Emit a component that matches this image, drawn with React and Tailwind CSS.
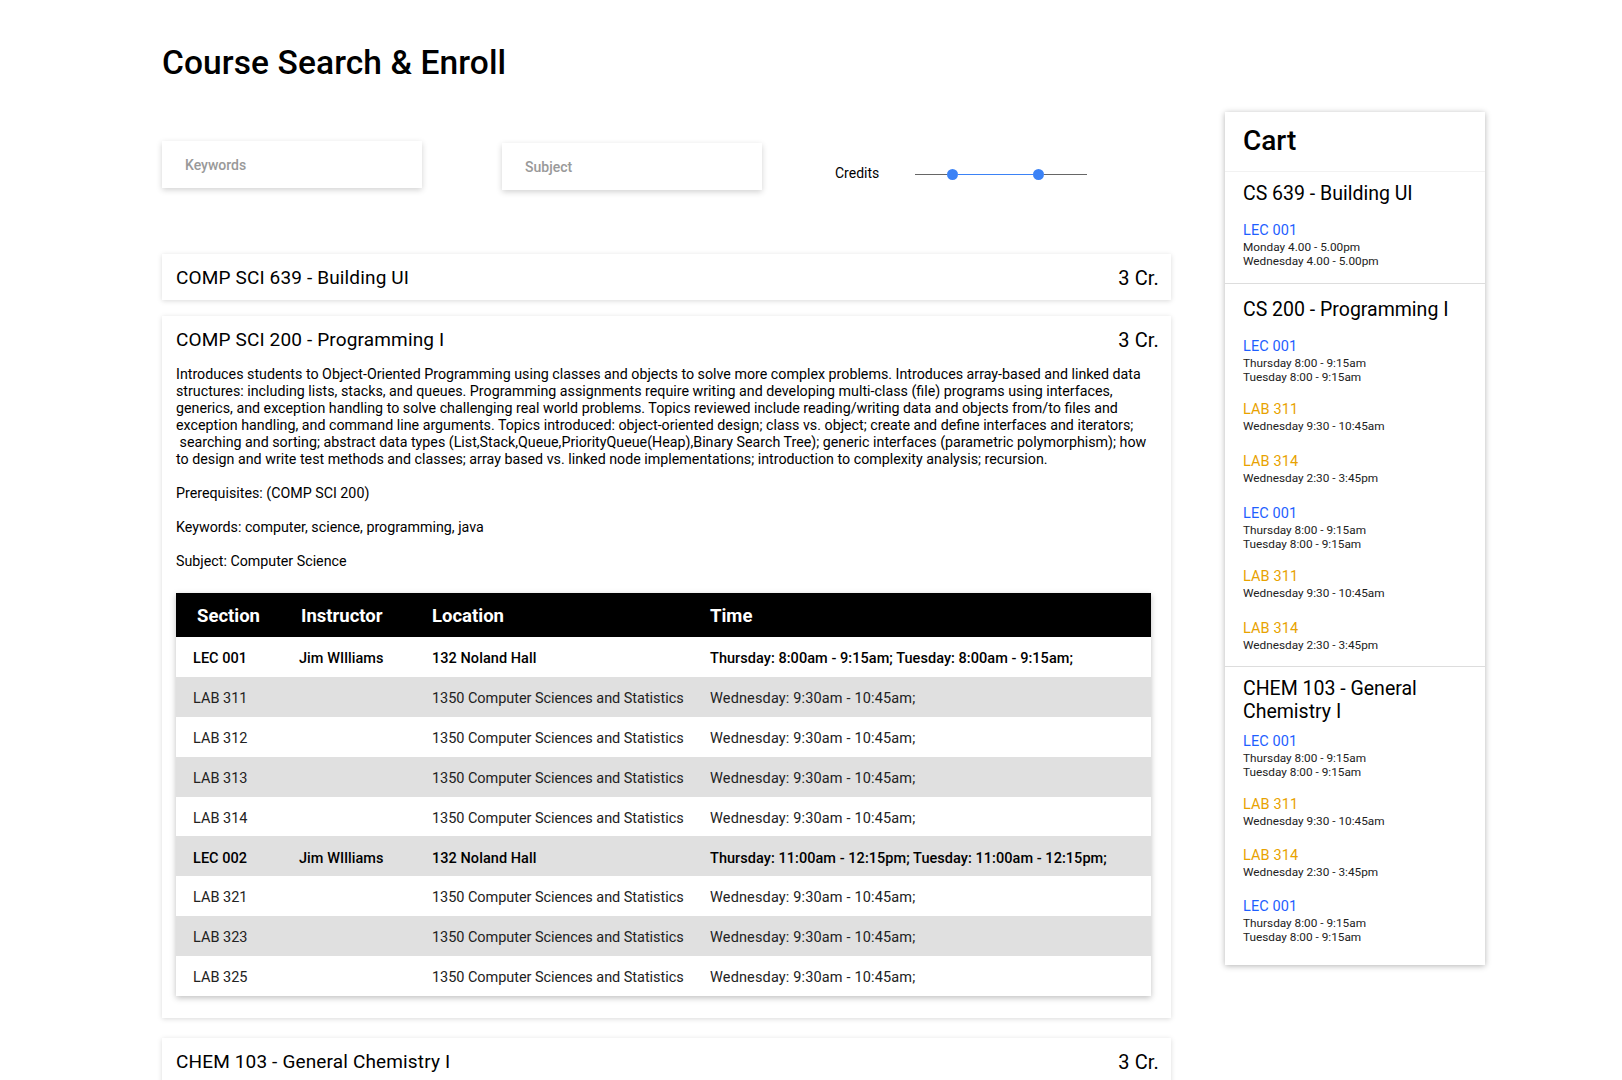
const descLines = [
  'Introduces students to Object-Oriented Programming using classes and objects to solve more complex problems. Introduces array-based and linked data',
  'structures: including lists, stacks, and queues. Programming assignments require writing and developing multi-class (file) programs using interfaces,',
  'generics, and exception handling to solve challenging real world problems. Topics reviewed include reading/writing data and objects from/to files and',
  'exception handling, and command line arguments. Topics introduced: object-oriented design; class vs. object; create and define interfaces and iterators;',
  '\u00a0searching and sorting; abstract data types (List,Stack,Queue,PriorityQueue(Heap),Binary Search Tree); generic interfaces (parametric polymorphism); how',
  'to design and write test methods and classes; array based vs. linked node implementations; introduction to complexity analysis; recursion.',
]

const loc = '1350 Computer Sciences and Statistics'
const wed = 'Wednesday: 9:30am - 10:45am;'
const rows = [
  ['LEC 001', 'Jim WIlliams', '132 Noland Hall', 'Thursday: 8:00am - 9:15am; Tuesday: 8:00am - 9:15am;', true],
  ['LAB 311', '', loc, wed],
  ['LAB 312', '', loc, wed],
  ['LAB 313', '', loc, wed],
  ['LAB 314', '', loc, wed],
  ['LEC 002', 'Jim WIlliams', '132 Noland Hall', 'Thursday: 11:00am - 12:15pm; Tuesday: 11:00am - 12:15pm;', true],
  ['LAB 321', '', loc, wed],
  ['LAB 323', '', loc, wed],
  ['LAB 325', '', loc, wed],
]

const lec = ['LEC 001', ['Thursday 8:00 - 9:15am', 'Tuesday 8:00 - 9:15am']]
const lab311 = ['LAB 311', ['Wednesday 9:30 - 10:45am']]
const lab314 = ['LAB 314', ['Wednesday 2:30 - 3:45pm']]

const cart = [
  { title: 'CS 639 - Building UI', pad: 'pt-[11px]', gap: 'mb-[14px]', labGap: 'mb-[18px]', items: [['LEC 001', ['Monday 4.00 - 5.00pm', 'Wednesday 4.00 - 5.00pm']]] },
  { title: 'CS 200 - Programming I', pad: 'pt-[15px]', gap: 'mb-[15px]', labGap: 'mb-[18px]', items: [lec, lab311, lab314, lec, lab311, lab314] },
  { title: 'CHEM 103 - General Chemistry I', pad: 'pt-[11px]', gap: 'mb-[8px]', labGap: 'mb-[17px]', items: [lec, lab311, lab314, lec] },
]

const CourseHead = ({ name }) => (
  <div className="flex justify-between items-center h-[46px] pt-[2px] pl-[14px] pr-[12px] text-[19px] tracking-[0.15px]">
    <span>{name}</span>
    <span className="text-[20px]">3 Cr.</span>
  </div>
)

const App = () => {
  return (
    <div className="h-screen overflow-hidden bg-white text-black font-['Roboto',sans-serif] pl-[162px]">
      <h1 className="pt-[43px] h-[112px] text-[33.5px] leading-[40px] tracking-[0.1px] font-medium">Course Search &amp; Enroll</h1>

      <div className="flex items-start gap-[54px]">
        <div className="w-[1009px] shrink-0 pt-[29px]">
          <div className="flex items-start h-[50px] mb-[63px]">
            <div className="w-[260px] h-[47px] pt-[2px] flex items-center pl-[23px] text-[14px] font-medium text-[#999] shadow-[0_2px_6px_rgba(0,0,0,0.18)]">Keywords</div>
            <div className="w-[260px] h-[47px] pt-[2px] mt-[2px] ml-[80px] flex items-center pl-[23px] text-[14px] font-medium text-[#999] shadow-[0_2px_6px_rgba(0,0,0,0.18)]">Subject</div>
            <span className="w-[80px] ml-[73px] mt-[23px] text-[14px] leading-[18px]">Credits</span>
            <div className="mt-[28px] flex items-center">
              <div className="w-[32px] h-px bg-[#666]"></div>
              <div className="w-[11px] h-[11px] rounded-full bg-[#3b82f6]"></div>
              <div className="w-[75px] h-px bg-[#3b82f6]"></div>
              <div className="w-[11px] h-[11px] rounded-full bg-[#3b82f6]"></div>
              <div className="w-[43px] h-px bg-[#666]"></div>
            </div>
          </div>

          <div className="shadow-[0_1px_5px_rgba(0,0,0,0.15)] mb-[16px]">
            <CourseHead name="COMP SCI 639 - Building UI" />
          </div>

          <div className="shadow-[0_1px_5px_rgba(0,0,0,0.15)] mb-[20px] pb-[22px]">
            <CourseHead name="COMP SCI 200 - Programming I" />
            <div className="pl-[14px] pt-[4px] text-[14.25px] leading-[17px] whitespace-nowrap">
              {descLines.map((l, i) => <div key={i}>{l}</div>)}
              <p className="mt-[17px]">Prerequisites: (COMP SCI 200)</p>
              <p className="mt-[17px]">Keywords: computer, science, programming, java</p>
              <p className="mt-[17px]">Subject: Computer Science</p>
            </div>

            <div className="ml-[14px] mt-[23px] w-[975px] shadow-[0_2px_6px_rgba(0,0,0,0.25)]">
              <div className="grid grid-cols-[106px_132px_278px_1fr] h-[44px] pt-[3px] items-center bg-black text-white text-[18.5px] font-bold">
                <span className="pl-[21px]">Section</span>
                <span className="pl-[19px]">Instructor</span>
                <span className="pl-[18px]">Location</span>
                <span className="pl-[18px]">Time</span>
              </div>
              {rows.map((r, i) => (
                <div
                  key={i}
                  className={`grid grid-cols-[106px_132px_278px_1fr] h-[39.9px] pt-[4px] items-center text-[14.5px] ${i % 2 === 1 ? 'bg-[#e0e0e0]' : 'bg-white'} ${r[4] ? 'font-medium text-black tracking-[0.05px]' : 'text-[#222]'}`}
                >
                  <span className="pl-[17px]">{r[0]}</span>
                  <span className="pl-[17px]">{r[1]}</span>
                  <span className={`pl-[18px] ${r[4] ? '' : 'tracking-[-0.05px]'}`}>{r[2]}</span>
                  <span className={`pl-[18px] ${r[4] ? '' : 'tracking-[0.15px]'}`}>{r[3]}</span>
                </div>
              ))}
            </div>
          </div>

          <div className="shadow-[0_1px_5px_rgba(0,0,0,0.15)]">
            <CourseHead name="CHEM 103 - General Chemistry I" />
          </div>
        </div>

        <aside className="w-[260px] shrink-0 shadow-[0_1px_6px_rgba(0,0,0,0.3)] pb-[6px]">
          <h2 className="h-[60px] flex items-center pl-[18px] pb-[2px] text-[28px] font-medium border-b border-[#f2f2f2]">Cart</h2>
          {cart.map((c, i) => (
            <div key={c.title} className={`px-[18px] ${c.pad} ${i < cart.length - 1 ? 'border-b border-[#ddd]' : ''}`}>
              <h3 className={`text-[19.5px] leading-[22.5px] ${c.gap}`}>{c.title}</h3>
              {c.items.map((it, j) => {
                const isLec = it[0].startsWith('LEC')
                const last = j === c.items.length - 1
                return (
                  <div key={j} className={isLec ? 'mb-[15px]' : last ? 'mb-[14px]' : c.labGap}>
                    <div className={`pt-[2px] text-[14.5px] leading-[18px] tracking-[0.1px] ${isLec ? 'text-[#1f5fff]' : 'text-[#e8a200]'}`}>{it[0]}</div>
                    {it[1].map((t) => <div key={t} className="text-[11.8px] leading-[14px] text-[#222]">{t}</div>)}
                  </div>
                )
              })}
            </div>
          ))}
        </aside>
      </div>
    </div>
  )
}

export default App
